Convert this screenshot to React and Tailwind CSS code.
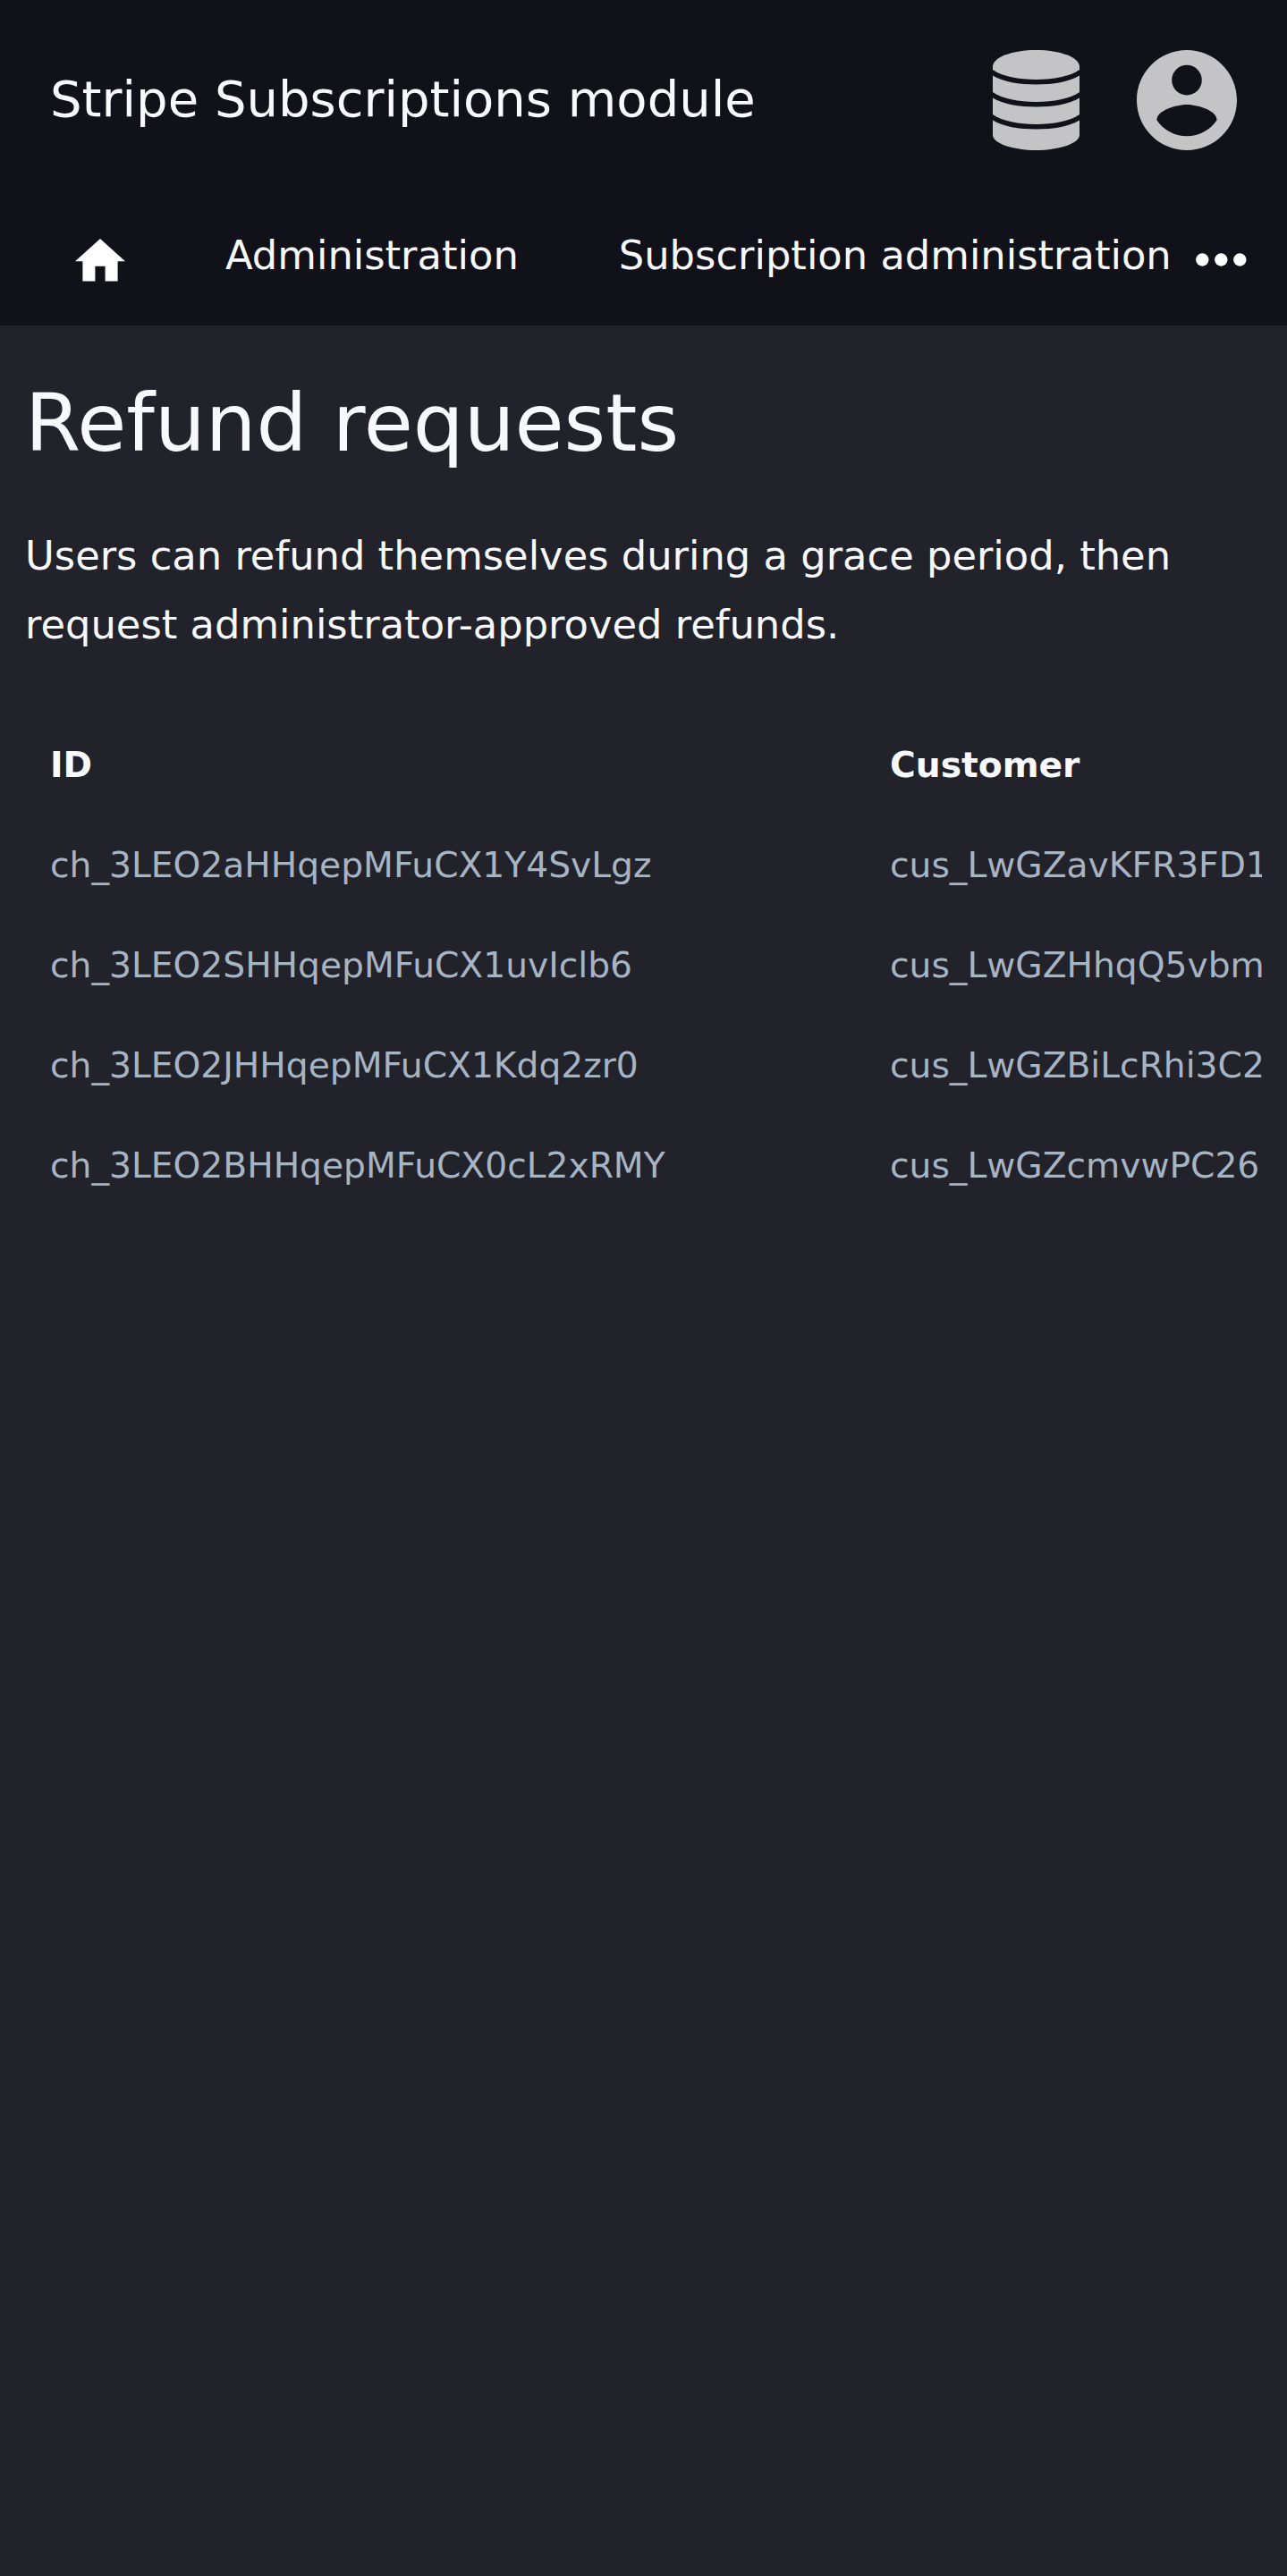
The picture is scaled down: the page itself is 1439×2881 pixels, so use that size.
import React from "react";

const rows = [
  ["ch_3LEO2aHHqepMFuCX1Y4SvLgz", "cus_LwGZavKFR3FD1"],
  ["ch_3LEO2SHHqepMFuCX1uvIclb6", "cus_LwGZHhqQ5vbm"],
  ["ch_3LEO2JHHqepMFuCX1Kdq2zr0", "cus_LwGZBiLcRhi3C2"],
  ["ch_3LEO2BHHqepMFuCX0cL2xRMY", "cus_LwGZcmvwPC26"],
];

function DatabaseIcon() {
  return (
    <svg className="h-[112px] w-[97px]" viewBox="0 0 97 112" fill="#c4c4c6">
      <path d="M0 18.5C0 8 22 0 48.5 0S97 8 97 18.5V22C86 29.5 68 33 48.5 33S11 29.5 0 22Z" />
      <path d="M0 28.5C12 35.5 29 38.5 48.5 38.5S85 35.5 97 28.5V47C86 54.5 68 58 48.5 58S11 54.5 0 47Z" />
      <path d="M0 53.5C12 60.5 29 63.5 48.5 63.5S85 60.5 97 53.5V72C86 79.5 68 83 48.5 83S11 79.5 0 72Z" />
      <path d="M0 78.5C12 85.5 29 88.5 48.5 88.5S85 85.5 97 78.5V95C97 104 75 112 48.5 112S0 104 0 95Z" />
    </svg>
  );
}

function AccountIcon() {
  return (
    <svg className="size-[112px]" viewBox="2 2 20 20" fill="#c4c4c6">
      <path d="M12 2C6.48 2 2 6.48 2 12s4.48 10 10 10 10-4.48 10-10S17.52 2 12 2zm0 3c1.66 0 3 1.34 3 3s-1.34 3-3 3-3-1.34-3-3 1.34-3 3-3zm0 14.2c-2.5 0-4.71-1.28-6-3.22.03-1.99 4-3.08 6-3.08 1.99 0 5.97 1.09 6 3.08-1.29 1.94-3.5 3.22-6 3.22z" />
    </svg>
  );
}

function HomeIcon() {
  return (
    <svg className="mt-[43px] h-[47.6px] w-[56px] shrink-0" viewBox="2 3 20 17" fill="#ffffff">
      <path d="M10 20v-6h4v6h5v-8h3L12 3 2 12h3v8z" />
    </svg>
  );
}

function MoreIcon() {
  return (
    <svg className="ml-[27px] mt-[59px] h-[15px] w-[57px] shrink-0" viewBox="0 0 57 15" fill="#ffffff">
      <circle cx="7.3" cy="7.5" r="7.2" />
      <circle cx="28.3" cy="7.5" r="7.2" />
      <circle cx="49.3" cy="7.5" r="7.2" />
    </svg>
  );
}

export default function App() {
  return (
    <div className="min-h-[2881px] w-full overflow-hidden bg-[#22222b] font-['DejaVu_Sans',sans-serif] text-[44.8px] text-[#f8f9fc]">
      <header className="h-[364px] bg-[#11111a]">
        <div className="flex h-[224px] items-center px-14">
          <h1 className="mb-0.5 flex-1 whitespace-nowrap text-[56px] leading-[84px]">Stripe Subscriptions module</h1>
          <div className="flex items-center gap-16">
            <DatabaseIcon />
            <AccountIcon />
          </div>
        </div>
        <nav className="flex whitespace-nowrap pl-[84px] leading-[67.2px]">
          <HomeIcon />
          <a className="ml-28 mt-7">Administration</a>
          <a className="ml-28 mt-7">Subscription administration</a>
          <MoreIcon />
        </nav>
      </header>
      <main className="px-7">
        <h2 className="pt-14 text-[89.6px] leading-[107.5px]">Refund requests</h2>
        <p className="mt-[55px] leading-[77px]">
          Users can refund themselves during a grace period, then request administrator-approved refunds.
        </p>
        <div className="mt-16 overflow-hidden">
          <div className="w-[1800px] text-[39.2px]">
            <div className="flex h-28 items-center font-bold">
              <div className="w-[939px] shrink-0 pl-7">ID</div>
              <div className="pl-7">Customer</div>
            </div>
            {rows.map(([id, customer]) => (
              <div key={id} className="flex h-28 items-center text-[#a7b4c2]">
                <div className="w-[939px] shrink-0 pl-7">{id}</div>
                <div className="pl-7">{customer}</div>
              </div>
            ))}
          </div>
        </div>
      </main>
    </div>
  );
}
